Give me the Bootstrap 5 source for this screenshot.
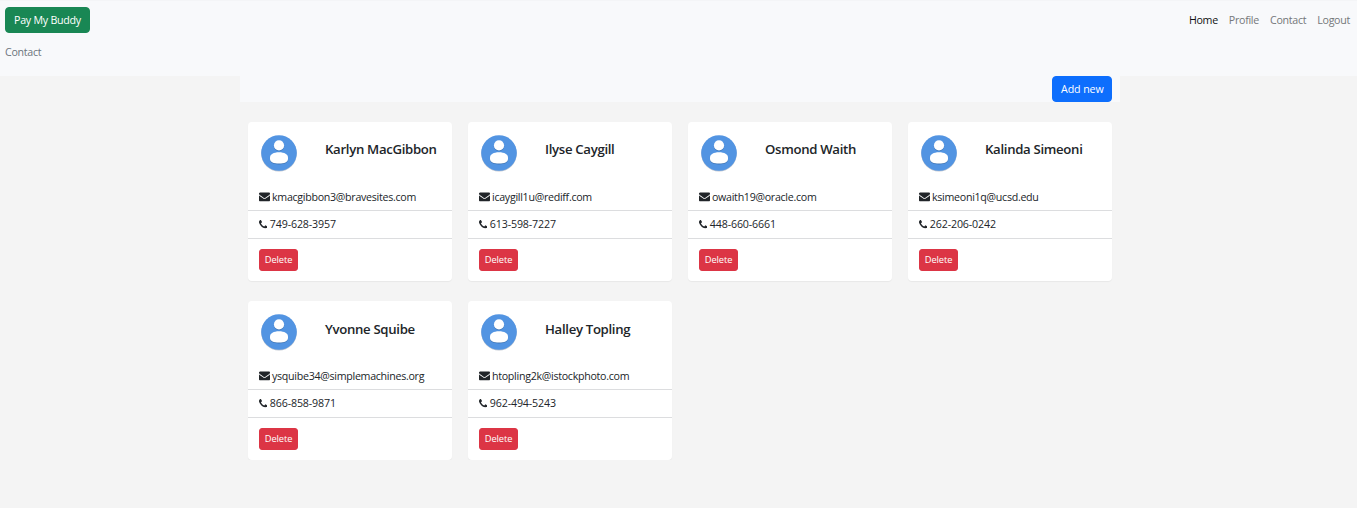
<!DOCTYPE html>
<html lang="en">
<head>
<meta charset="utf-8">
<meta name="viewport" content="width=device-width, initial-scale=1">
<title>Pay My Buddy - Contact</title>
<link href="https://cdn.jsdelivr.net/npm/bootstrap@5.3.0/dist/css/bootstrap.min.css" rel="stylesheet">
<style>
  html { font-size: 10.6667px; }
  body { font-family: "Open Sans", "Noto Sans", sans-serif; background: #f4f4f4; color: #212529; overflow: hidden; letter-spacing: -.29px; }
  .page-head { background: #f8f9fb; height: 76px; padding: 6px 7px 0 5px; border-top: 1px solid #f4f5f7; }
  .btn-md { height: 26px; padding: 4px 8px; line-height: 16px; border-radius: 4px; }
  .brand-btn { width: 85px; letter-spacing: -.25px; }
  .add-btn { width: 60px; letter-spacing: -.1px; }
  .top-links { gap: 11px; padding-top: 5px; }
  .top-link { color: #747779; text-decoration: none; line-height: 16px; }
  .top-link.active { color: #111; }
  .crumb { color: #6c757d; margin-top: 11px; line-height: 16px; }
  .wrap { width: 880px; margin: 0 auto; }
  .page-body { padding-left: 3px; }
  .tool-strip { background: #f8f9fb; height: 26px; padding-right: 8px; }
  .contacts { padding: 0 8px; margin-top: 20px; }
  .contact-grid { --bs-gutter-x: 16px; --bs-gutter-y: 20px; }
  .person { border: 0; border-radius: 4px; height: 159px; box-shadow: 0 1px 1px rgba(0,0,0,.05); }
  .person-top { height: 61px; padding: 12px 0 0 12px; }
  .person-name { font-size: 13.2px; font-weight: 600; line-height: 16px; margin: 7px 0 0 27px; white-space: nowrap; letter-spacing: -.32px; }
  .col-3:nth-child(n+5) .person-name { margin-top: 8px; }
  .info-line { padding: 0 11px; height: 28px; border-bottom: 1px solid #dcdddf; white-space: nowrap; }
  .mail-text { margin-left: 2px; }
  .phone-text { margin-left: 2.4px; letter-spacing: -.14px; padding-bottom: 1px; }
  .del-btn { width: 39px; height: 22px; margin: 10px 0 0 11px; padding: 0; font-size: 9.33px; line-height: 20px; border-radius: 3px; letter-spacing: -.1px; }
</style>
</head>
<body>
<svg class="d-none" xmlns="http://www.w3.org/2000/svg">
  <symbol id="avatar" viewBox="0 0 38 38">
    <circle cx="19" cy="19.7" r="17.8" fill="#bfc6cf"/>
    <circle cx="19" cy="19" r="17.8" fill="#5294e2"/>
    <g fill="#3f75b5" transform="translate(0 .8)"><circle cx="19" cy="11.4" r="5.1"/><path d="M10 23.5c0-3 3.6-5.2 9-5.2s9 2.200 9 5.200v1.500c0 3-3.600 4.600-9 4.600s-9-1.600-9-4.600z"/></g>
    <g fill="#fff"><circle cx="19" cy="11.400" r="5.100"/><path d="M10 23.500c0-3 3.600-5.200 9-5.200s9 2.200 9 5.200v1.500c0 3-3.600 4.600-9 4.600s-9-1.600-9-4.600z"/></g>
  </symbol>
  <symbol id="envelope" viewBox="0 0 1792 1792">
    <path d="M1792 710v794q0 66-47 113t-113 47h-1472q-66 0-113-47t-47-113v-794q44 49 101 87 362 246 497 345 57 42 92.500 65.500t94.500 48 110 24.500h2q51 0 110-24.500t94.500-48 92.500-65.500q170-123 498-345 57-39 100-87zm0-294q0 79-49 151t-122 123q-376 261-468 325-10 7-42.500 30.500t-54 38-52 32.500-57.500 27-50 9h-2q-23 0-50-9t-57.500-27-52-32.500-54-38-42.500-30.500q-91-64-262-182.500t-205-142.500q-62-42-117-115.500t-55-136.500q0-78 41.500-130t118.500-52h1472q65 0 112.500 47t47.500 113z"/>
  </symbol>
  <symbol id="phone" viewBox="0 0 1408 1408">
    <path d="M1408 1112q0 27-10 70.500t-21 68.500q-21 50-122 106-94 51-186 51-27 0-53-3.500t-57.500-12.500-47-14.500-55.500-20.500-49-18q-98-35-175-83-127-79-264-216t-216-264q-48-77-83-175-3-9-18-49t-20.500-55.500-14.500-47-12.500-57.500-3.500-53q0-92 51-186 56-101 106-122 25-11 68.500-21t70.500-10q14 0 21 3 18 6 53 76 11 19 30 54t35 63.500 31 53.500q3 4 17.500 25t21.500 35.500 7 28.500q0 20-28.500 50t-62 55-62 53-28.500 46q0 9 5 22.500t8.500 20.500 14 24 11.500 19q76 137 174 235t235 174q2 1 19 11.500t24 14 20.500 8.500 22.500 5q18 0 46-28.500t53-62 55-62 50-28.500q14 0 28.500 7t35.500 21.500 25 17.500q25 15 53.500 31t63.500 35 54 30q70 35 76 53 3 7 3 21z"/>
  </symbol>
</svg>

<header class="page-head">
  <nav class="d-flex justify-content-between align-items-start">
    <a class="btn btn-success btn-md brand-btn text-nowrap" href="#">Pay My Buddy</a>
    <div class="d-flex top-links">
      <a class="top-link active" href="#">Home</a>
      <a class="top-link" href="#">Profile</a>
      <a class="top-link" href="#">Contact</a>
      <a class="top-link" href="#">Logout</a>
    </div>
  </nav>
  <div class="crumb">Contact</div>
</header>

<div class="page-body">
<main class="wrap">
  <div class="tool-strip d-flex justify-content-end">
    <a class="btn btn-primary btn-md add-btn text-nowrap" href="#">Add new</a>
  </div>
  <div class="contacts">
    <div class="row contact-grid" id="grid"></div>
  </div>
</main>
</div>

<script src="https://cdn.jsdelivr.net/npm/bootstrap@5.3.0/dist/js/bootstrap.bundle.min.js"></script>
<script>
  const people = [
    ["Karlyn MacGibbon", "kmacgibbon3@bravesites.com", "749-628-3957"],
    ["Ilyse Caygill", "icaygill1u@rediff.com", "613-598-7227"],
    ["Osmond Waith", "owaith19@oracle.com", "448-660-6661"],
    ["Kalinda Simeoni", "ksimeoni1q@ucsd.edu", "262-206-0242"],
    ["Yvonne Squibe", "ysquibe34@simplemachines.org", "866-858-9871"],
    ["Halley Topling", "htopling2k@istockphoto.com", "962-494-5243"]
  ];
  document.getElementById("grid").innerHTML = people.map(([name, mail, phone]) => `
    <div class="col-3">
      <div class="card person">
        <div class="person-top d-flex align-items-start">
          <svg width="38" height="38" class="flex-shrink-0"><use href="#avatar"/></svg>
          <h5 class="person-name">${name}</h5>
        </div>
        <div class="info-line d-flex align-items-center"><svg width="11" height="11" fill="#212529" class="flex-shrink-0"><use href="#envelope"/></svg><span class="mail-text">${mail}</span></div>
        <div class="info-line d-flex align-items-center"><svg width="8.400" height="8.400" fill="#212529" class="flex-shrink-0"><use href="#phone"/></svg><span class="phone-text">${phone}</span></div>
        <button type="button" class="btn btn-danger del-btn">Delete</button>
      </div>
    </div>`).join("");
</script>
</body>
</html>
